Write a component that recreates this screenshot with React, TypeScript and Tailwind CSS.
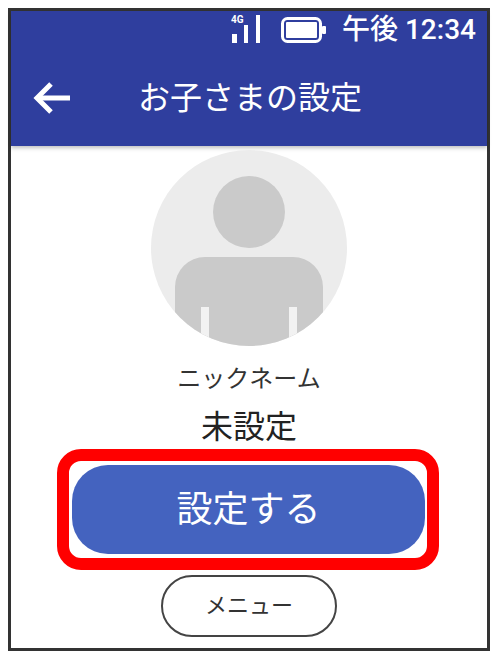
const FONT = "font-['Roboto','Noto_Sans_CJK_JP',sans-serif]";

function SignalIcon() {
  return (
    <svg width="30" height="30" viewBox="0 0 30 30" className="text-white">
      <rect x="1" y="19" width="5" height="9" fill="currentColor" />
      <rect x="13" y="10" width="4" height="18" fill="currentColor" />
      <rect x="25" y="0" width="4" height="28" fill="currentColor" />
      <text x="0" y="8" fontSize="10" fontWeight="700" fill="currentColor" fontFamily="Roboto, sans-serif">
        4G
      </text>
    </svg>
  );
}

function BatteryIcon() {
  return (
    <svg width="46" height="26" viewBox="0 0 46 26">
      <rect x="1.5" y="1.5" width="38" height="23" rx="5" fill="#2f3e9e" stroke="#fff" strokeWidth="3" />
      <rect x="5" y="5" width="31" height="16" rx="1" fill="#fff" />
      <rect x="41" y="9" width="4" height="8" rx="1" fill="#fff" />
    </svg>
  );
}

function Avatar() {
  return (
    <div className="relative w-[196px] h-[196px] rounded-full bg-[#ececec] overflow-hidden flex flex-col items-center">
      <div className="w-[72px] h-[72px] rounded-full bg-[#cacaca] mt-[26px] shrink-0" />
      <div className="relative w-[148px] h-[100px] rounded-t-[30px] bg-[#cacaca] mt-[9px] shrink-0">
        <div className="absolute left-[26px] top-[50px] w-[8px] h-[50px] bg-[#f2f2f2]" />
        <div className="absolute right-[26px] top-[50px] w-[8px] h-[50px] bg-[#f2f2f2]" />
      </div>
    </div>
  );
}

export default function App() {
  return (
    <div className={`w-[498px] h-[659px] bg-white pt-[8px] pl-[8px] ${FONT}`}>
      <div className="relative w-[482px] h-[643px] border-[3px] border-[#333333] flex flex-col">
        <div className="h-[135px] bg-[#2f3e9e] text-white shadow-[0_2px_4px_rgba(0,0,0,0.25)] shrink-0">
          <div className="flex items-center justify-end h-[38px] pr-[11px]">
            <SignalIcon />
            <div className="ml-[20px]">
              <BatteryIcon />
            </div>
            <span className="ml-[15px] text-[28px] leading-[30px] font-medium">午後 12:34</span>
          </div>
          <div className="relative flex items-center h-[97px]">
            <svg width="38" height="34" viewBox="0 0 38 34" className="ml-[22px]" fill="none" stroke="#fff" strokeWidth="5">
              <path d="M37 17H4" />
              <path d="M18 3L4 17l14 14" />
            </svg>
            <span className="ml-[67px] text-[32px] leading-[40px]">お子さまの設定</span>
          </div>
        </div>

        <div className="flex flex-col items-center pt-[4px]">
          <Avatar />
          <span className="mt-[17px] text-[24px] leading-[32px] text-[#333333]">ニックネーム</span>
          <span className="mt-[10px] text-[32px] leading-[44px] text-[#222222]">未設定</span>
          <button className="mt-[16px] mr-[1px] w-[353px] h-[89px] rounded-[36px] bg-[#4463bf] text-white text-[36px] leading-none">
            設定する
          </button>
          <button className="mt-[21px] w-[176px] h-[62px] rounded-[31px] border-2 border-[#444444] bg-white text-[#333333] text-[22px] leading-none">
            メニュー
          </button>
        </div>

        <div className="absolute left-[46px] top-[438px] w-[382px] h-[121px] rounded-[24px] border-[12px] border-[#ff0000]" />
      </div>
    </div>
  );
}
